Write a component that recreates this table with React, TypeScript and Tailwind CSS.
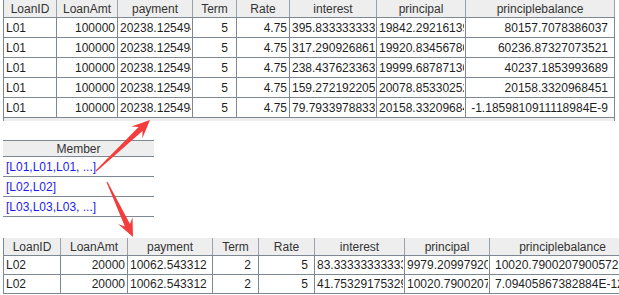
import React from 'react'

type Col = { name: string; w: string; align?: string }

// top result grid: 3|57|118|194|237|290|377|466|615
const topCols: Col[] = [
  { name: 'LoanID', w: 'w-[53px]' },
  { name: 'LoanAmt', w: 'w-[61px]', align: 'text-right pr-[1px]' },
  { name: 'payment', w: 'w-[75px]' },
  { name: 'Term', w: 'w-[44px]', align: 'text-right pr-[7px]' },
  { name: 'Rate', w: 'w-[53px]', align: 'text-right pr-[1px]' },
  { name: 'interest', w: 'w-[87px]' },
  { name: 'principal', w: 'w-[89px]' },
  { name: 'principlebalance', w: 'w-[149px]', align: 'text-right pr-[5px]' },
]

const topRows = [
  ['L01', '100000', '20238.125494', '5', '4.75', '395.8333333333', '19842.292161399', '80157.7078386037'],
  ['L01', '100000', '20238.125494', '5', '4.75', '317.2909268611', '19920.834567801', '60236.87327073521'],
  ['L01', '100000', '20238.125494', '5', '4.75', '238.4376233631', '19999.687871301', '40237.1853993689'],
  ['L01', '100000', '20238.125494', '5', '4.75', '159.2721922051', '20078.853302521', '20158.3320968451'],
  ['L01', '100000', '20238.125494', '5', '4.75', '79.79339788331', '20158.332096841', '-1.1859810911118984E-9'],
]

// L02 grid: 3|61|128|213|259|315|405|490|...
const botCols: Col[] = [
  { name: 'LoanID', w: 'w-[57px]' },
  { name: 'LoanAmt', w: 'w-[67px]', align: 'text-right pr-[1px]' },
  { name: 'payment', w: 'w-[85px]' },
  { name: 'Term', w: 'w-[46px]', align: 'text-right pr-[6px]' },
  { name: 'Rate', w: 'w-[56px]', align: 'text-right pr-[5px]' },
  { name: 'interest', w: 'w-[90px]' },
  { name: 'principal', w: 'w-[85px]' },
  { name: 'principlebalance', w: 'w-[146px]', align: 'text-left pl-[3px]' },
]

const botRows = [
  ['L02', '20000', '10062.543312', '2', '5', '83.333333333333', '9979.2099792099', '10020.7900207900572'],
  ['L02', '20000', '10062.543312', '2', '5', '41.753291753291', '10020.790020790', '7.09405867382884E-12'],
]

const members = ['[L01,L01,L01, ...]', '[L02,L02]', '[L03,L03,L03, ...]']

function Arrow({ x1, y1, x2, y2 }: { x1: number; y1: number; x2: number; y2: number }) {
  const dx = x2 - x1
  const dy = y2 - y1
  const len = Math.hypot(dx, dy)
  const ux = dx / len
  const uy = dy / len
  const nx = -uy
  const ny = ux
  const hb = 18
  const hw = 8
  const neck = 13
  const bx = x2 - ux * hb
  const by = y2 - uy * hb
  const kx = x2 - ux * neck
  const ky = y2 - uy * neck
  const p = (x: number, y: number) => `${x.toFixed(1)},${y.toFixed(1)}`
  const pts = [
    p(x1 + nx * 0.6, y1 + ny * 0.6),
    p(kx + nx * 2.8, ky + ny * 2.8),
    p(bx + nx * hw, by + ny * hw),
    p(x2, y2),
    p(bx - nx * hw, by - ny * hw),
    p(kx - nx * 2.8, ky - ny * 2.8),
    p(x1 - nx * 0.6, y1 - ny * 0.6),
  ].join(' ')
  return <polygon points={pts} fill="#f43c3c" />
}

function Table({
  cols,
  rows,
  headH,
  rowH,
  last,
}: {
  cols: Col[]
  rows: string[][]
  headH: string
  rowH: string
  last?: string
}) {
  return (
    <div className="flex flex-col">
      <div className={`flex bg-[#eeeeee] border-b border-[#7d8893] ${headH}`}>
        {cols.map((c, i) => (
          <div
            key={i}
            className={`${c.w} shrink-0 border-r border-[#9aa3ad] flex items-center justify-center text-[#333333] overflow-hidden whitespace-nowrap`}
          >
            {c.name}
          </div>
        ))}
      </div>
      {rows.map((r, ri) => (
        <div key={ri} className={`flex border-b border-[#7d8893] ${rowH}`}>
          {r.map((v, ci) => (
            <div
              key={ci}
              className={`${cols[ci].w} shrink-0 border-r border-[#7d8893] pl-[2px] pr-[1px] flex items-center overflow-hidden`}
            >
              <div
                className={`w-full overflow-hidden whitespace-nowrap text-[#1f1f1f] ${
                  cols[ci].align ?? 'text-left'
                }`}
              >
                {v}
              </div>
            </div>
          ))}
        </div>
      ))}
      {last && <div className={last} />}
    </div>
  )
}

export default function App() {
  return (
    <div className="relative w-[619px] h-[295px] overflow-hidden bg-white font-['Liberation_Sans',Arial,sans-serif] text-[12px] leading-none">
      {/* top result */}
      <div className="ml-[3px] w-[612px] border-l border-[#7d8893]">
        <Table cols={topCols} rows={topRows} headH="h-[18px]" rowH="h-[20px]" last="h-[3px] bg-[#eeeeee] border-r border-[#7d8893]" />
      </div>

      {/* member list */}
      <div className="ml-[3px] mt-[19px] w-[151px] flex flex-col">
        <div className="h-[17px] bg-[#eeeeee] border-t border-b border-[#7d8893] flex items-center justify-center text-[#333333]">
          Member
        </div>
        {members.map((m, i) => (
          <div key={i} className="h-[20px] border-b border-[#7d8893] flex items-center px-[3px] text-[#1c1cf0]">
            {m}
          </div>
        ))}
      </div>

      {/* L02 detail */}
      <div className="ml-[3px] mt-[21px] w-[640px] border-l border-[#7d8893]">
        <Table cols={botCols} rows={botRows} headH="h-[18px]" rowH="h-[19px]" />
      </div>

      <svg className="absolute left-0 top-0 pointer-events-none" width="619" height="295">
        <Arrow x1={96} y1={171} x2={150} y2={120} />
        <Arrow x1={107} y1={182} x2={133} y2={237} />
      </svg>
    </div>
  )
}
